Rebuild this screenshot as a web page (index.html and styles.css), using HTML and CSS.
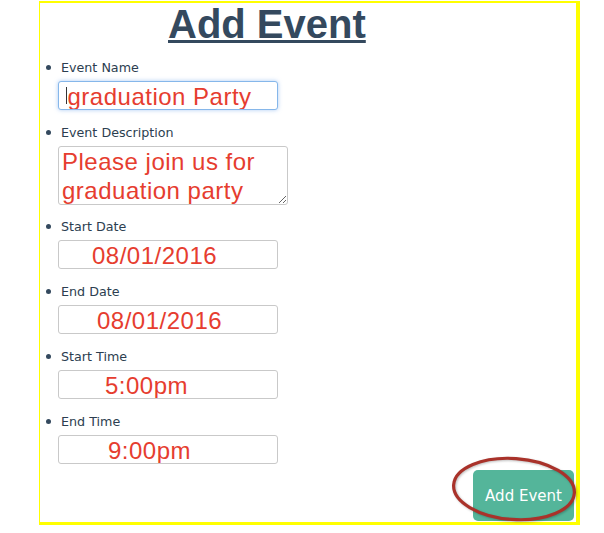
FILE: index.html
```html
<!DOCTYPE html>
<html>
<head>
<meta charset="utf-8">
<link rel="stylesheet" href="styles.css">
</head>
<body>
<div class="panel">
  <h1 class="title">Add Event</h1>
  <ul class="fields">
    <li class="field">
      <div class="label"><span class="dot"></span>Event Name</div>
      <span class="focus-wrap">
        <input class="box focused pad-name" type="text" value="graduation Party">
        <span class="caret"></span>
      </span>
    </li>
    <li class="field field-area">
      <div class="label"><span class="dot"></span>Event Description</div>
      <textarea class="area">Please join us for graduation party</textarea>
    </li>
    <li class="field">
      <div class="label"><span class="dot"></span>Start Date</div>
      <input class="box pad-sd" type="text" value="08/01/2016">
    </li>
    <li class="field">
      <div class="label"><span class="dot"></span>End Date</div>
      <input class="box pad-ed" type="text" value="08/01/2016">
    </li>
    <li class="field">
      <div class="label"><span class="dot"></span>Start Time</div>
      <input class="box pad-st" type="text" value="5:00pm">
    </li>
    <li class="field field-last">
      <div class="label"><span class="dot"></span>End Time</div>
      <input class="box pad-et" type="text" value="9:00pm">
    </li>
  </ul>
  <div class="actions">
    <button class="submit" type="button">Add Event</button>
  </div>
  <svg class="circle" width="140" height="80" viewBox="0 0 140 80">
    <ellipse cx="69" cy="39" rx="60.5" ry="30.5" transform="rotate(4 69 39)" fill="none" stroke="#a9322a" stroke-width="3.2"/>
  </svg>
</div>
</body>
</html>
```

FILE: styles.css
```css
* { box-sizing: border-box; }

html, body {
  margin: 0;
  padding: 0;
  background: #ffffff;
}

.panel {
  position: relative;
  margin: 1px 0 0 39px;
  width: 541px;
  height: 524px;
  border-style: solid;
  border-color: #ffff00;
  border-width: 2px 4px 3px 1px;
  background: #ffffff;
  display: flex;
  flex-direction: column;
}

.title {
  margin: 0;
  padding-left: 128px;
  font-family: "Liberation Sans", Arial, sans-serif;
  font-weight: bold;
  font-size: 40px;
  line-height: 42px;
  color: #34495e;
  text-decoration: underline;
  text-decoration-thickness: 3px;
}

.fields {
  list-style: none;
  margin: 15px 0 0 0;
  padding: 0;
}

.field {
  display: flex;
  flex-direction: column;
  align-items: flex-start;
  margin-bottom: 15px;
}

.field-area { margin-bottom: 14px; }
.field-last { margin-bottom: 0; }

.label {
  display: flex;
  align-items: center;
  gap: 10px;
  height: 15px;
  line-height: 15px;
  margin-left: 6px;
  margin-bottom: 6px;
  font-family: "DejaVu Sans", Verdana, sans-serif;
  font-size: 12.7px;
  color: #2c3e50;
}

.dot {
  width: 5px;
  height: 5px;
  border-radius: 50%;
  background: #34495e;
  flex: none;
}

.box {
  display: block;
  width: 220px;
  height: 29px;
  margin: 0 0 0 18px;
  padding: 3px 0 0 0;
  border: 1px solid #c9c9c9;
  border-radius: 3px;
  background: #ffffff;
  font-family: "Liberation Sans", Arial, sans-serif;
  font-size: 24px;
  letter-spacing: 0.5px;
  line-height: 27px;
  color: #e63d2f;
  outline: none;
}

.focus-wrap {
  position: relative;
  display: block;
}

.focused {
  border-color: #86b7ea;
  box-shadow: 0 0 4px rgba(102, 160, 233, 0.55);
}

.caret {
  position: absolute;
  left: 26px;
  top: 6px;
  width: 1px;
  height: 17px;
  background: #333333;
}

.pad-name { padding-left: 8.5px; }
.pad-sd { padding-left: 33px; }
.pad-ed { padding-left: 38px; }
.pad-st { padding-left: 46px; }
.pad-et { padding-left: 49px; }

.area {
  display: block;
  width: 230px;
  height: 59px;
  margin: 0 0 0 18px;
  padding: 0 3px;
  border: 1px solid #c9c9c9;
  border-radius: 3px;
  font-family: "Liberation Sans", Arial, sans-serif;
  font-size: 24px;
  letter-spacing: 0.5px;
  line-height: 29px;
  color: #e63d2f;
  overflow: hidden;
  outline: none;
}

.actions {
  display: flex;
  justify-content: flex-end;
  margin-top: 6px;
  padding-right: 2px;
}

.submit {
  width: 101px;
  height: 51px;
  border: none;
  border-radius: 5px;
  background: #54b59a;
  color: #ffffff;
  font-family: "DejaVu Sans", Verdana, sans-serif;
  font-size: 15px;
  padding: 0;
}

.circle {
  position: absolute;
  left: 405px;
  top: 447px;
  overflow: visible;
  filter: drop-shadow(1px 1px 1px rgba(0, 0, 0, 0.25));
}
```
